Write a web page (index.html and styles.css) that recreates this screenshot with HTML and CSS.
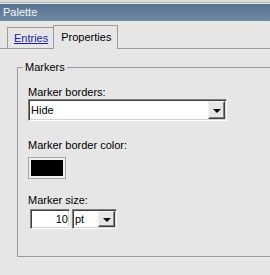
FILE: index.html
```html
<!DOCTYPE html>
<html lang="en">

<head>
    <meta charset="UTF-8">
    <title>Palette</title>
    <link rel="stylesheet" href="styles.css">
</head>

<body>
    <div class="window">
        <div class="titlebar">Palette</div>

        <div class="tabs">
            <a href="#" class="tab">Entries</a>
            <span class="tab tab-active">Properties</span>
        </div>

        <div class="panel">
            <fieldset class="group">
                <legend>Markers</legend>

                <label class="field-label">Marker borders:</label>
                <div class="combo combo-wide">
                    <span class="combo-text">Hide</span>
                    <span class="combo-btn"><span class="arrow"></span></span>
                </div>

                <label class="field-label label-color">Marker border color:</label>
                <div class="swatch"><div class="swatch-fill"></div></div>

                <label class="field-label label-size">Marker size:</label>
                <div class="size-row">
                    <div class="num-input">10</div>
                    <div class="combo combo-unit">
                        <span class="combo-text">pt</span>
                        <span class="combo-btn"><span class="arrow"></span></span>
                    </div>
                </div>
            </fieldset>
        </div>
    </div>
</body>

</html>
```

FILE: styles.css
```css
* {
    margin: 0;
    padding: 0;
    box-sizing: border-box;
}

:root {
    --bg-panel: #e6e6e6;
    --line: #9c9c9c;
    --dark: #404040;
    --mid: #808080;
}

body {
    background-color: var(--bg-panel);
    font-family: 'Liberation Sans', Arial, sans-serif;
    font-size: 11px;
    color: #000;
    overflow: hidden;
}

.window {
    border-top: 2px solid #d9d9d9;
    padding-top: 2px;
}

.window::before {
    content: "";
    display: block;
    height: 1px;
    background-color: #b8b8b8;
    margin-top: -2px;
    margin-bottom: 1px;
}

.titlebar {
    height: 17px;
    line-height: 17px;
    padding-left: 3px;
    color: #f4f6f8;
    background: linear-gradient(to bottom, #557290, #728aa3);
}

.tabs {
    display: flex;
    align-items: flex-end;
    padding: 4px 0 0 7px;
    border-bottom: 1px solid var(--line);
    height: 28px;
}

.tab {
    display: block;
    height: 21px;
    line-height: 13px;
    padding: 4px 5px 0 6px;
    border: 1px solid var(--line);
    border-bottom: none;
    color: #1a1aa8;
    text-decoration: underline;
}

.tab-active {
    height: 24px;
    margin-bottom: -1px;
    margin-left: -1px;
    padding: 5px 6px 0 7px;
    color: #000;
    text-decoration: none;
    background-color: var(--bg-panel);
}

.group {
    margin: 12px 0 0 17px;
    border: 1px solid var(--line);
    border-right: none;
    padding: 12px 0 27px 10px;
}

.group legend {
    margin-left: -5px;
    padding: 0 2px;
    line-height: 13px;
}

.field-label {
    display: block;
    line-height: 13px;
}

.label-color {
    margin-top: 18px;
}

.label-size {
    margin-top: 15px;
}

.combo {
    display: flex;
    align-items: stretch;
    height: 22px;
    background-color: #fff;
    border: 1px solid;
    border-color: var(--mid) #ffffff #ffffff var(--mid);
    box-shadow: inset 1px 1px 0 var(--dark), inset -1px -1px 0 #d4d4d4;
    padding: 1px;
}

.combo-wide {
    width: 199px;
}

.combo-unit {
    width: 45px;
}

.combo-text {
    flex: 1;
    line-height: 18px;
    padding-left: 1px;
    color: #000;
}

.combo-btn {
    width: 17px;
    display: flex;
    align-items: center;
    justify-content: center;
    background-color: var(--bg-panel);
    border: 1px solid;
    border-color: #f2f2f2 var(--dark) var(--dark) #f2f2f2;
    box-shadow: inset -1px -1px 0 var(--mid);
}

.arrow {
    width: 0;
    height: 0;
    border-left: 4px solid transparent;
    border-right: 4px solid transparent;
    border-top: 4px solid #000;
    margin-top: 1px;
}

.swatch {
    width: 38px;
    height: 22px;
    margin-top: 5px;
    padding: 2px;
    border: 1px solid #a3a3a3;
    background-color: #f0f0f0;
}

.swatch-fill {
    width: 100%;
    height: 100%;
    background-color: #000;
}

.size-row {
    display: flex;
    gap: 2px;
    margin-top: 2px;
    margin-left: 2px;
}

.num-input {
    width: 40px;
    height: 20px;
    line-height: 16px;
    text-align: right;
    padding-right: 1px;
    padding-top: 1px;
    background-color: #fff;
    border: 1px solid;
    border-color: var(--mid) #ffffff #ffffff var(--mid);
    box-shadow: inset 1px 1px 0 var(--dark), inset -1px -1px 0 #d4d4d4;
}

.size-row .combo {
    height: 20px;
}

.size-row .combo-text {
    line-height: 16px;
}
```
